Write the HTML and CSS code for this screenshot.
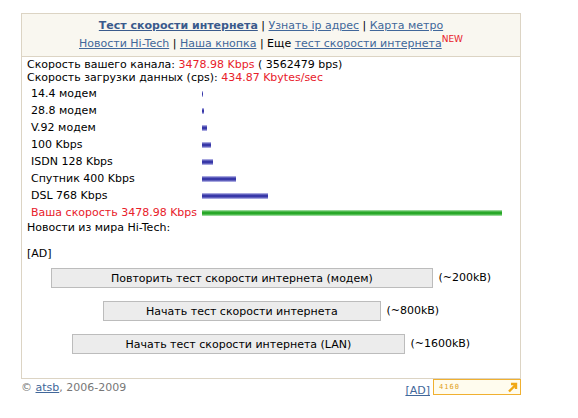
FILE: index.html
```html
<!DOCTYPE html>
<html lang="ru">
<head>
    <meta charset="UTF-8">
    <title>Тест скорости интернета</title>
    <link rel="stylesheet" href="styles.css">
</head>
<body>
<div class="page">

    <!-- Меню -->
    <div class="menu">
        <div><a href="#" class="current">Тест скорости интернета</a> | <a href="#">Узнать ip адрес</a> | <a href="#">Карта метро</a></div>
        <div><a href="#">Новости Hi-Tech</a> | <a href="#">Наша кнопка</a> | Еще <a href="#">тест скорости интернета</a><sup class="new">NEW</sup></div>
    </div>

    <div class="content">
        <div>Скорость вашего канала: <span class="red">3478.98 Kbps</span> ( 3562479 bps)</div>
        <div>Скорость загрузки данных (cps): <span class="red">434.87 Kbytes/sec</span></div>

        <!-- Сравнение скоростей -->
        <table class="speeds">
            <tr><td>14.4 модем</td><td><div class="bar" style="width: 1px"></div></td></tr>
            <tr><td>28.8 модем</td><td><div class="bar" style="width: 2px"></div></td></tr>
            <tr><td>V.92 модем</td><td><div class="bar" style="width: 5px"></div></td></tr>
            <tr><td>100 Kbps</td><td><div class="bar" style="width: 9px"></div></td></tr>
            <tr><td>ISDN 128 Kbps</td><td><div class="bar" style="width: 11px"></div></td></tr>
            <tr><td>Спутник 400 Kbps</td><td><div class="bar" style="width: 34px"></div></td></tr>
            <tr><td>DSL 768 Kbps</td><td><div class="bar" style="width: 66px"></div></td></tr>
            <tr><td class="red">Ваша скорость 3478.98 Kbps</td><td><div class="bar green" style="width: 300px"></div></td></tr>
        </table>

        <div>Новости из мира Hi-Tech:</div>
        <div class="ad">[AD]</div>

        <div class="test first"><button class="b1">Повторить тест скорости интернета (модем)</button> (~200kB)</div>
        <div class="test"><button class="b2">Начать тест скорости интернета</button> (~800kB)</div>
        <div class="test"><button class="b3">Начать тест скорости интернета (LAN)</button> (~1600kB)</div>
    </div>

    <div class="footer">
        <div class="copy">&copy; <a href="#">atsb</a>, 2006-2009</div>
        <div class="right">
            <a href="#" class="ad-link">[AD]</a>
            <div class="counter">
                <span>4160</span>
                <svg width="11" height="11" viewBox="0 0 11 11"><path d="M2 9.5 L8.5 3 M4 2 H9 V7" stroke="#f0a818" stroke-width="2.4" fill="none"/></svg>
            </div>
        </div>
    </div>

</div>
</body>
</html>
```

FILE: styles.css
```css
body {
    margin: 0;
    font-family: "DejaVu Sans", Verdana, sans-serif;
    font-size: 11px;
    color: #000;
}
a {
    color: #41679a;
}
.page {
    width: 500px;
    margin: 13px 0 0 21px;
}
.red {
    color: #e8202a;
}
.menu {
    border: 1px solid #dcd4c4;
    background: #f9f7f0;
    text-align: center;
    padding: 3px 0 3px;
    line-height: 18px;
}
.menu .current {
    font-weight: bold;
    color: #3a5a8c;
}
.new {
    color: #e8202a;
    font-size: 9px;
    line-height: 0;
}
.content {
    border: 1px solid #dcd4c4;
    border-top: none;
    padding: 1px 5px 24px;
    line-height: 13px;
}
.speeds {
    border-collapse: collapse;
    margin-top: 1px;
}
.speeds td {
    height: 17px;
    padding: 0 0 0 4px;
}
.speeds td:first-child {
    width: 171px;
}
.speeds td:last-child {
    padding-left: 0;
}
.bar {
    height: 6px;
    background: linear-gradient(#c8c8f0, #3838a8 35%, #3838a8 65%, #c8c8f0);
}
.bar.green {
    background: linear-gradient(#b8e8b8, #28a828 35%, #28a828 65%, #b8e8b8);
}
.ad {
    margin-top: 13px;
}
.test {
    text-align: center;
    height: 20px;
    line-height: 20px;
    margin-top: 13px;
}
.test.first {
    margin-top: 8px;
}
button {
    font-family: "DejaVu Sans", Verdana, sans-serif;
    font-size: 11px;
    height: 20px;
    background: #ececec;
    border: 1px solid #bcbcbc;
    padding: 0;
    margin-right: 2px;
    vertical-align: top;
}
.b1 { width: 382px; }
.b2 { width: 278px; }
.b3 { width: 333px; }
.footer {
    display: flex;
    justify-content: space-between;
    color: #777;
    font-size: 11px;
    line-height: 13px;
}
.copy {
    padding-top: 2px;
}
.right {
    display: flex;
    align-items: flex-start;
}
.ad-link {
    margin-top: 5px;
    margin-right: 3px;
}
.counter {
    box-sizing: border-box;
    width: 88px;
    height: 16px;
    border: 1px solid #f0b030;
    background: #fffcee;
    display: flex;
    justify-content: space-between;
    align-items: center;
    padding: 0 2px 0 5px;
    font-family: "DejaVu Sans Mono", monospace;
    font-size: 7px;
    letter-spacing: 1px;
    color: #e0a020;
}
```
